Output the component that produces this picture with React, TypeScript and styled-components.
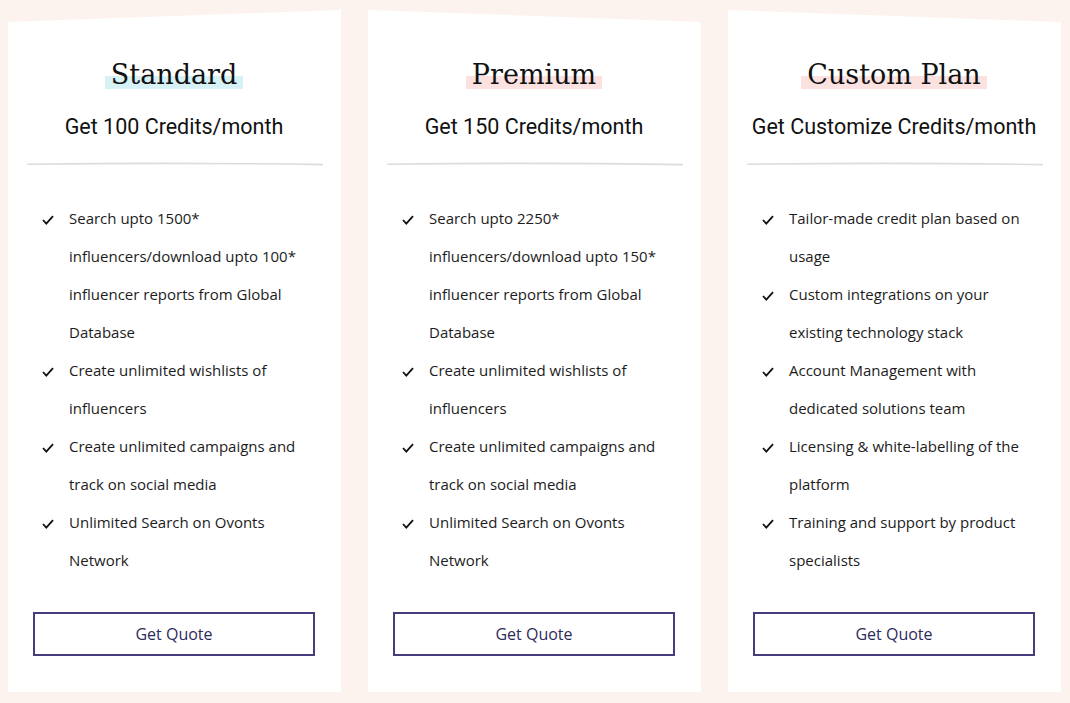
import React from "react";
import styled, { createGlobalStyle } from "styled-components";

const GlobalStyle = createGlobalStyle`
  html, body {
    margin: 0;
    padding: 0;
    background: #fcf3ee;
  }
`;

const Page = styled.main`
  display: grid;
  grid-template-columns: repeat(3, 333px);
  column-gap: 27px;
  align-items: start;
  padding: 10px 8px 11px 8px;
`;

const Card = styled.section<{ $tilt: "left" | "right" }>`
  background: #ffffff;
  display: flex;
  flex-direction: column;
  padding: 48px 26px 36px 25px;
  clip-path: ${(p) =>
    p.$tilt === "left"
      ? "polygon(0 12px, 100% 0, 100% 100%, 0 100%)"
      : "polygon(0 0, 100% 12px, 100% 100%, 0 100%)"};
`;

const TitleRow = styled.div`
  text-align: center;
  height: 34px;
`;

const Title = styled.h2<{ $mark: string }>`
  display: inline-block;
  margin: 0;
  padding: 0 6px;
  font-family: "DejaVu Serif", serif;
  font-weight: 400;
  font-size: 27px;
  line-height: 34px;
  color: #111;
  background: linear-gradient(
    transparent 0,
    transparent 53%,
    ${(p) => p.$mark} 53%,
    ${(p) => p.$mark} 91%,
    transparent 91%
  );
`;

const Credits = styled.p`
  margin: 21px -10px 0;
  text-align: center;
  white-space: nowrap;
  font-family: Roboto, "Liberation Sans", sans-serif;
  font-size: 21.5px;
  line-height: 28px;
  color: #111;
`;

const Divider = styled.svg`
  display: block;
  margin: 21px 0 0 -6px;
  width: 296px;
  height: 4px;
`;

const List = styled.ul`
  list-style: none;
  margin: 33px 0 0;
  padding: 0 0 0 9px;
`;

const Item = styled.li`
  display: flex;
  align-items: flex-start;
`;

const Tick = styled.span`
  flex: 0 0 12px;
  height: 38px;
  margin-right: 15px;
  display: flex;
  align-items: center;
  padding-top: 3px;
  box-sizing: border-box;
`;

const Lines = styled.div`
  font-family: "Open Sans", "Liberation Sans", sans-serif;
  font-size: 15px;
  line-height: 38px;
  color: #1c1c1c;
`;

const Line = styled.span`
  display: block;
  white-space: nowrap;
`;

const QuoteButton = styled.button`
  margin-top: 33px;
  height: 44px;
  width: 100%;
  background: #fff;
  border: 2px solid #463d7e;
  font-family: "Open Sans", "Liberation Sans", sans-serif;
  font-size: 16px;
  color: #2e2a5c;
  cursor: pointer;
`;

type Plan = {
  name: string;
  mark: string;
  credits: string;
  tilt: "left" | "right";
  features: string[][];
};

const plans: Plan[] = [
  {
    name: "Standard",
    mark: "#d6f2f7",
    credits: "Get 100 Credits/month",
    tilt: "left",
    features: [
      ["Search upto 1500*", "influencers/download upto 100*", "influencer reports from Global", "Database"],
      ["Create unlimited wishlists of", "influencers"],
      ["Create unlimited campaigns and", "track on social media"],
      ["Unlimited Search on Ovonts", "Network"],
    ],
  },
  {
    name: "Premium",
    mark: "#fbe1e0",
    credits: "Get 150 Credits/month",
    tilt: "right",
    features: [
      ["Search upto 2250*", "influencers/download upto 150*", "influencer reports from Global", "Database"],
      ["Create unlimited wishlists of", "influencers"],
      ["Create unlimited campaigns and", "track on social media"],
      ["Unlimited Search on Ovonts", "Network"],
    ],
  },
  {
    name: "Custom Plan",
    mark: "#fbe1e0",
    credits: "Get Customize Credits/month",
    tilt: "right",
    features: [
      ["Tailor-made credit plan based on", "usage"],
      ["Custom integrations on your", "existing technology stack"],
      ["Account Management with", "dedicated solutions team"],
      ["Licensing & white-labelling of the", "platform"],
      ["Training and support by product", "specialists"],
    ],
  },
];

const Check = () => (
  <svg width="12" height="10" viewBox="0 0 12 10">
    <path d="M1 5 L4.3 8.6 L11 1.2" fill="none" stroke="#111" strokeWidth="1.8" />
  </svg>
);

const PlanCard = ({ plan }: { plan: Plan }) => (
  <Card $tilt={plan.tilt}>
    <TitleRow>
      <Title $mark={plan.mark}>{plan.name}</Title>
    </TitleRow>
    <Credits>{plan.credits}</Credits>
    <Divider viewBox="0 0 296 4" preserveAspectRatio="none">
      <path d="M0 2.2 Q 150 0.4 296 2.6" fill="none" stroke="#dcdcdc" strokeWidth="1.6" />
    </Divider>
    <List>
      {plan.features.map((lines, i) => (
        <Item key={i}>
          <Tick>
            <Check />
          </Tick>
          <Lines>
            {lines.map((l, j) => (
              <Line key={j}>{l}</Line>
            ))}
          </Lines>
        </Item>
      ))}
    </List>
    <QuoteButton>Get Quote</QuoteButton>
  </Card>
);

export default function App() {
  return (
    <>
      <GlobalStyle />
      <Page>
        {plans.map((p) => (
          <PlanCard key={p.name} plan={p} />
        ))}
      </Page>
    </>
  );
}
